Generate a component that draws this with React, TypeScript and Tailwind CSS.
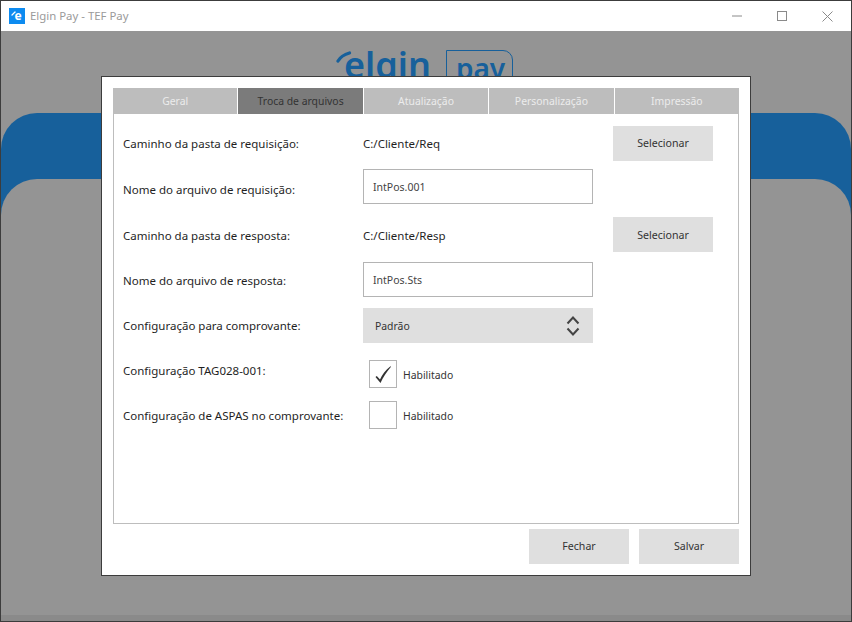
import React from 'react';

const tabs = ['Geral', 'Troca de arquivos', 'Atualização', 'Personalização', 'Impressão'];

const Label: React.FC<{ text: string; className?: string }> = ({ text, className }) => (
  <div className={`w-[240px] shrink-0 text-[11.5px] text-[#1f1f1f] ${className ?? ''}`}>{text}</div>
);

const GrayButton: React.FC<{ text: string; className?: string }> = ({ text, className }) => (
  <button className={`h-[35px] w-[100px] bg-[#dfdfdf] text-[10.6px] text-[#333333] ${className ?? ''}`}>{text}</button>
);

const TextBox: React.FC<{ value: string }> = ({ value }) => (
  <div className="flex h-[35px] w-[230px] items-center border border-[#b4b4b4] bg-white pt-[2px] pl-[9px] text-[10.5px] text-[#444444]">{value}</div>
);

const CheckField: React.FC<{ checked?: boolean }> = ({ checked }) => (
  <div className="ml-[6px] flex items-center">
    <div className="flex h-[28px] w-[28px] items-center justify-center border border-[#b4b4b4] bg-white">
      {checked && (
        <svg width="18" height="18" viewBox="0 0 18 18">
          <path d="M1.5 12 L2.8 11 L6 14.5 C8 9.5 11.5 5 16.5 1.2 L17 1.8 C12.5 7 9 12.5 6.5 18 Z" fill="#333333" />
        </svg>
      )}
    </div>
    <span className="ml-[6px] pt-[4px] text-[10.4px] text-[#333333]">Habilitado</span>
  </div>
);

export default function App() {
  return (
    <div className="relative flex h-[622px] w-[852px] flex-col overflow-hidden border border-[#3c3c3c] bg-[#949494] font-['Noto_Sans',sans-serif]">
      {/* title bar */}
      <div className="flex h-[30px] shrink-0 items-center bg-white pl-[8px]">
        <div className="relative flex h-[16px] w-[16px] items-center justify-center bg-[#0d8bf0]">
          <span className="ml-[2px] text-[12px] leading-none font-bold text-white">e</span>
          <svg className="absolute top-[3px] left-[2px]" width="5" height="5" viewBox="0 0 5 5">
            <path d="M1 4 L4 1" stroke="white" strokeWidth="1.3" strokeLinecap="round" />
          </svg>
        </div>
        <span className="ml-[5px] text-[11.4px] text-[#9a9a9a]">Elgin Pay - TEF Pay</span>
        <div className="ml-auto flex items-center">
          <svg width="10" height="2" viewBox="0 0 10 2" className="mr-[35px]">
            <path d="M0 1 H10" stroke="#8a8a8a" strokeWidth="1" />
          </svg>
          <svg width="10" height="10" viewBox="0 0 10 10" className="mr-[35px]">
            <rect x="0.5" y="0.5" width="9" height="9" fill="none" stroke="#8a8a8a" strokeWidth="1" />
          </svg>
          <svg width="11" height="11" viewBox="0 0 11 11" className="mr-[18px]">
            <path d="M0.5 0.5 L10.5 10.5 M10.5 0.5 L0.5 10.5" stroke="#8a8a8a" strokeWidth="1" />
          </svg>
        </div>
      </div>

      {/* app background behind the dialog */}
      <div className="flex flex-1 flex-col">
        <div className="relative mt-[17px] flex h-[34px] items-start pl-[343px]">
          <svg className="absolute top-[3px] left-[335px]" width="16" height="12" viewBox="0 0 16 12">
            <path d="M2 10 C4 6.5 8 3.5 13.5 2" fill="none" stroke="#17609b" strokeWidth="3.2" strokeLinecap="round" />
          </svg>
          <span className="mt-[-8px] text-[36px] leading-[50px] font-semibold text-[#17609b]">elgin</span>
          <div className="mt-[2px] ml-[15px] h-[40px] w-[67px] rounded-tr-[10px] border border-[#17609b] pl-[9px] text-[28px] leading-[35px] font-semibold text-[#17609b]">
            pay
          </div>
        </div>
        <div className="mt-[31px] flex flex-1 flex-col rounded-t-[36px] bg-[#17609b] pt-[66px]">
          <div className="flex-1 rounded-t-[36px] bg-[#949494]"></div>
        </div>
        <div className="h-[6px] shrink-0 bg-[#8a8a8a]"></div>
      </div>

      {/* settings dialog */}
      <div className="absolute top-[75px] left-[100px] flex h-[500px] w-[650px] flex-col border border-[#3c3c3c] bg-white px-[11px] pt-[11px]">
        <div className="flex h-[26px] shrink-0">
          {tabs.map((tab, i) => (
            <div
              key={tab}
              className={`flex flex-1 items-center justify-center pt-[2px] text-[10.4px] ${i > 0 ? 'border-l border-white' : ''} ${
                tab === 'Troca de arquivos' ? 'bg-[#7b7b7b] text-[#333333]' : 'bg-[#bdbdbd] text-[#ececec]'
              }`}
            >
              {tab}
            </div>
          ))}
        </div>

        <div className="flex h-[410px] shrink-0 flex-col border border-t-0 border-[#bdbdbd] pt-[12px] pl-[9px]">
          <div className="flex h-[35px] items-center">
            <Label text="Caminho da pasta de requisição:" className="pt-[1px]" />
            <div className="w-[250px] pt-[1px] text-[11.5px] text-[#1f1f1f]">C:/Cliente/Req</div>
            <GrayButton text="Selecionar" />
          </div>
          <div className="mt-[8px] flex h-[35px] items-center">
            <Label text="Nome do arquivo de requisição:" className="pt-[7px]" />
            <TextBox value="IntPos.001" />
          </div>
          <div className="mt-[13px] flex h-[35px] items-center">
            <Label text="Caminho da pasta de resposta:" className="pt-[2px]" />
            <div className="w-[250px] pt-[2px] text-[11.5px] text-[#1f1f1f]">C:/Cliente/Resp</div>
            <GrayButton text="Selecionar" className="pt-[2px]" />
          </div>
          <div className="mt-[10px] flex h-[35px] items-center">
            <Label text="Nome do arquivo de resposta:" className="pt-[2px]" />
            <TextBox value="IntPos.Sts" />
          </div>
          <div className="mt-[11px] flex h-[35px] items-center">
            <Label text="Configuração para comprovante:" className="pt-[1px]" />
            <div className="flex h-[35px] w-[230px] items-center justify-between bg-[#dfdfdf] pr-[13px] pl-[12px] text-[10.4px] text-[#333333]">
              <span className="pt-[2px]">Padrão</span>
              <svg width="14" height="20" viewBox="0 0 14 20">
                <path d="M1.5 7.5 L7 1.5 L12.5 7.5 M1.5 12.5 L7 18.5 L12.5 12.5" fill="none" stroke="#444444" strokeWidth="2" />
              </svg>
            </div>
          </div>
          <div className="mt-[17px] flex h-[28px] items-center">
            <Label text="Configuração TAG028-001:" className="pb-[7px]" />
            <CheckField checked />
          </div>
          <div className="mt-[13px] flex h-[28px] items-center">
            <Label text="Configuração de ASPAS no comprovante:" className="pt-[2px]" />
            <CheckField />
          </div>
        </div>

        <div className="mt-[5px] flex justify-end gap-[10px]">
          <GrayButton text="Fechar" />
          <GrayButton text="Salvar" />
        </div>
      </div>
    </div>
  );
}
